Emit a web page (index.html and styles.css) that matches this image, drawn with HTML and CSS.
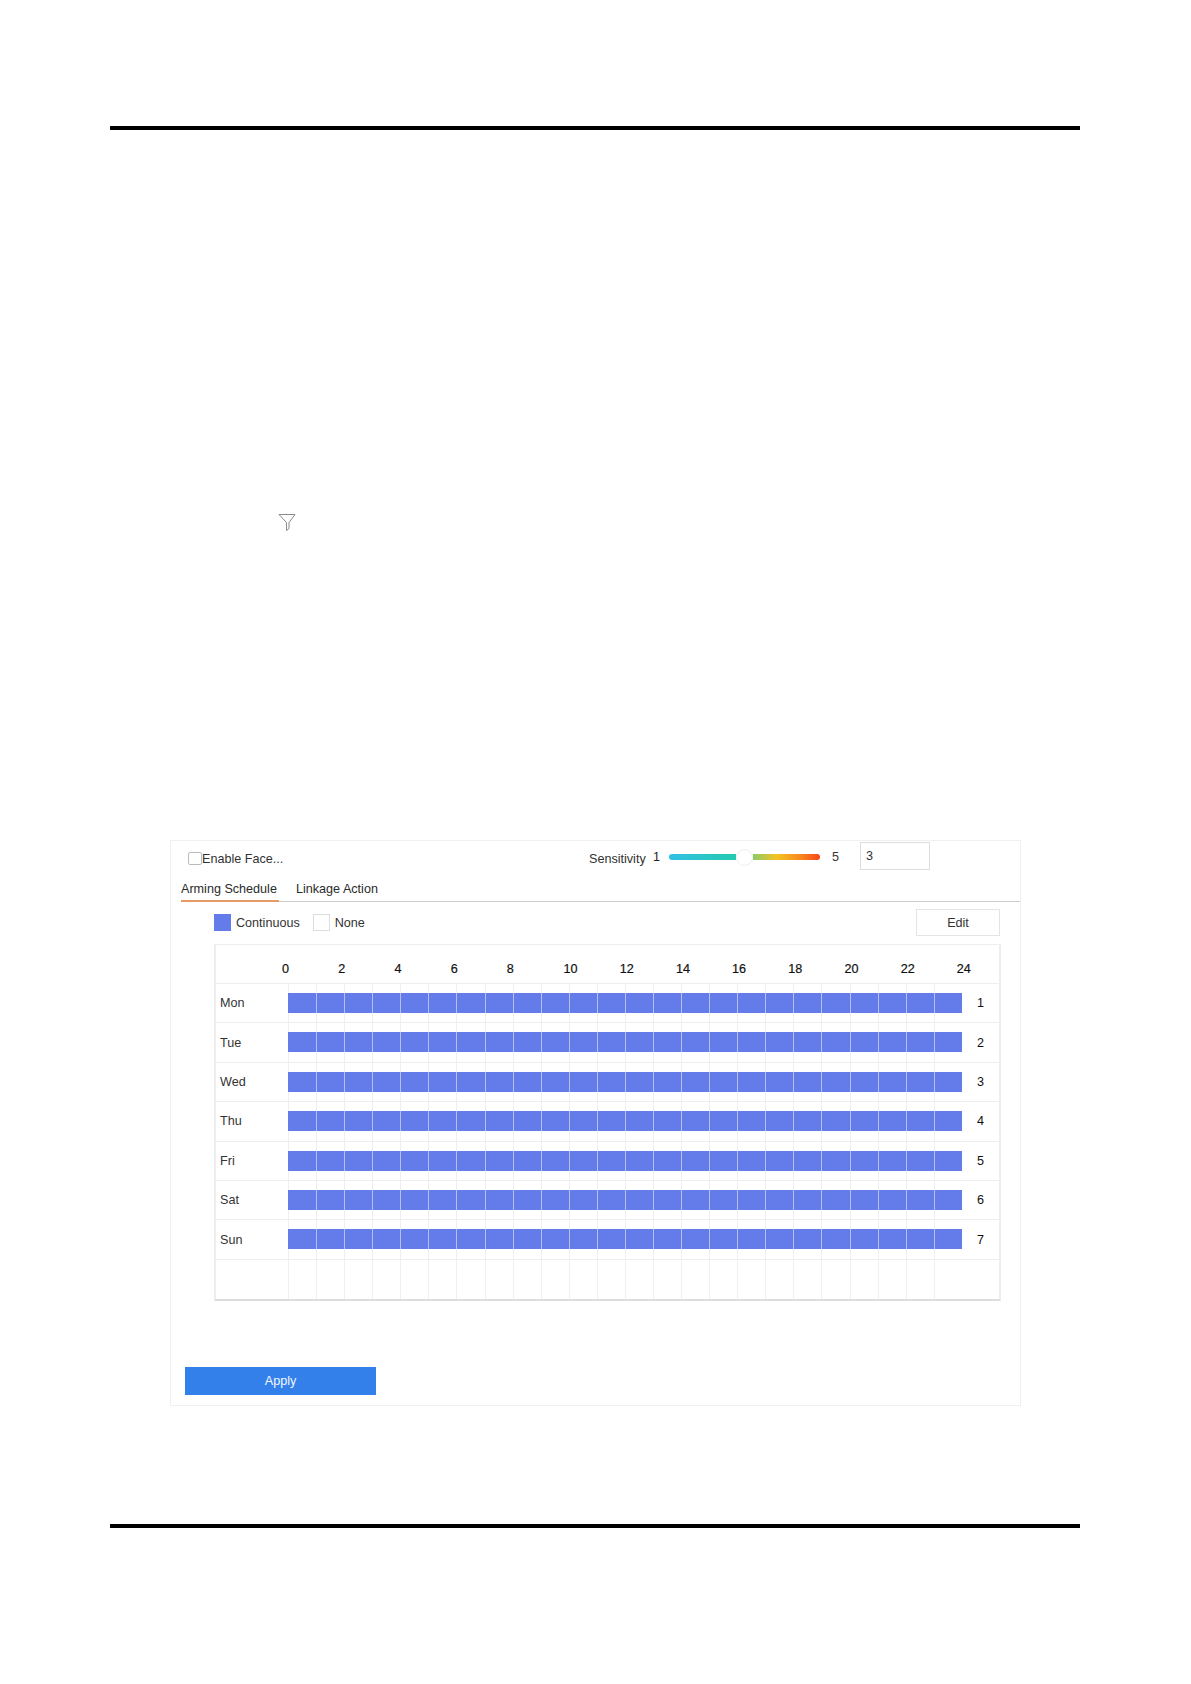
FILE: index.html
```html
<!DOCTYPE html>
<html lang="en">
<head>
<meta charset="utf-8">
<title>Enable Face</title>
<link rel="stylesheet" href="styles.css">
</head>
<body>
<div class="page">
  <div class="rule"></div>
  <svg class="filter-icon" width="18" height="18" viewBox="0 0 18 18" aria-hidden="true">
    <path d="M1 1.5H17L11 9.5V15.5L8.5 17.5V9.5Z" fill="none" stroke="#8a8a8a" stroke-width="1"/>
  </svg>
  <section class="panel">
    <div class="head">
      <label class="enable"><span class="check"></span>Enable Face...</label>
      <span class="sens-label">Sensitivity</span>
      <span class="sens-min">1</span>
      <div class="slider">
        <span class="track-left"></span>
        <span class="thumb"></span>
        <span class="track-right"></span>
      </div>
      <span class="sens-max">5</span>
      <div class="sens-input">3</div>
    </div>
    <div class="tabs">
      <span class="tab tab-active">Arming Schedule</span>
      <span class="tab">Linkage Action</span>
    </div>
    <div class="toolbar">
      <span class="swatch swatch-on"></span><span class="legend">Continuous</span>
      <span class="swatch swatch-off"></span><span class="legend">None</span>
      <button class="edit">Edit</button>
    </div>
    <div class="schedule">
      <div class="hours">
        <span>0</span><span>2</span><span>4</span><span>6</span><span>8</span><span class="two">10</span><span class="two">12</span>
        <span class="two">14</span><span class="two">16</span><span class="two">18</span><span class="two">20</span><span class="two">22</span><span class="two">24</span>
      </div>
      <div class="row"><span class="day">Mon</span><div class="track on"><i></i><i></i><i></i><i></i><i></i><i></i><i></i><i></i><i></i><i></i><i></i><i></i><i></i><i></i><i></i><i></i><i></i><i></i><i></i><i></i><i></i><i></i><i></i><i></i></div><span class="num">1</span></div>
      <div class="row"><span class="day">Tue</span><div class="track on"><i></i><i></i><i></i><i></i><i></i><i></i><i></i><i></i><i></i><i></i><i></i><i></i><i></i><i></i><i></i><i></i><i></i><i></i><i></i><i></i><i></i><i></i><i></i><i></i></div><span class="num">2</span></div>
      <div class="row"><span class="day">Wed</span><div class="track on"><i></i><i></i><i></i><i></i><i></i><i></i><i></i><i></i><i></i><i></i><i></i><i></i><i></i><i></i><i></i><i></i><i></i><i></i><i></i><i></i><i></i><i></i><i></i><i></i></div><span class="num">3</span></div>
      <div class="row"><span class="day">Thu</span><div class="track on"><i></i><i></i><i></i><i></i><i></i><i></i><i></i><i></i><i></i><i></i><i></i><i></i><i></i><i></i><i></i><i></i><i></i><i></i><i></i><i></i><i></i><i></i><i></i><i></i></div><span class="num">4</span></div>
      <div class="row"><span class="day">Fri</span><div class="track on"><i></i><i></i><i></i><i></i><i></i><i></i><i></i><i></i><i></i><i></i><i></i><i></i><i></i><i></i><i></i><i></i><i></i><i></i><i></i><i></i><i></i><i></i><i></i><i></i></div><span class="num">5</span></div>
      <div class="row"><span class="day">Sat</span><div class="track on"><i></i><i></i><i></i><i></i><i></i><i></i><i></i><i></i><i></i><i></i><i></i><i></i><i></i><i></i><i></i><i></i><i></i><i></i><i></i><i></i><i></i><i></i><i></i><i></i></div><span class="num">6</span></div>
      <div class="row"><span class="day">Sun</span><div class="track on"><i></i><i></i><i></i><i></i><i></i><i></i><i></i><i></i><i></i><i></i><i></i><i></i><i></i><i></i><i></i><i></i><i></i><i></i><i></i><i></i><i></i><i></i><i></i><i></i></div><span class="num">7</span></div>
      <div class="row row-empty"><span class="day"></span><div class="track"><i></i><i></i><i></i><i></i><i></i><i></i><i></i><i></i><i></i><i></i><i></i><i></i><i></i><i></i><i></i><i></i><i></i><i></i><i></i><i></i><i></i><i></i><i></i><i></i></div><span class="num"></span></div>
    </div>
    <button class="apply">Apply</button>
  </section>
  <div class="rule rule-bottom"></div>
</div>
</body>
</html>
```
FILE: styles.css
```css
* { box-sizing: border-box; }
html, body { margin: 0; background: #fff; }
body { font-family: "Liberation Sans", Arial, sans-serif; font-size: 12.6px; color: #333; }
.page { width: 1191px; height: 1684px; padding: 126px 111px 0 110px; }
.rule { height: 4px; background: #000; }
.rule-bottom { margin-top: 118px; }
.filter-icon { display: block; margin: 383px 0 0 168px; }

.panel { width: 851px; height: 566px; margin: 309px 0 0 60px; border: 1px solid #f0f0f0; }

.head { display: flex; align-items: center; height: 33px; padding-left: 17px; }
.enable { display: flex; align-items: center; width: 401px; padding-top: 2px; white-space: nowrap; }
.check { flex: none; width: 14px; height: 13px; border: 1px solid #bbb; border-radius: 2px; }
.sens-label { width: 64px; padding-top: 3px; }
.sens-min { width: 16px; margin-top: -2px; color: #222; }
.slider { display: flex; align-items: center; width: 151px; margin-top: -1px; }
.track-left { width: 67px; height: 6px; border-radius: 3px 0 0 3px; background: linear-gradient(90deg, #33bfe6, #22cbb0); }
.thumb { width: 17px; height: 17px; border-radius: 50%; background: #fff; border: 1px solid #eee; }
.track-right { flex: 1; height: 6px; border-radius: 0 3px 3px 0; background: linear-gradient(90deg, #8ccb6a, #f4c322 35%, #f88a1e 70%, #f8431a); }
.sens-max { width: 26px; margin: -1px 0 0 12px; }
.sens-input { width: 70px; height: 28px; margin: -3px 0 0 2px; padding: 6px 0 0 5px; border: 1px solid #ddd; }

.tabs { display: flex; height: 28px; margin-left: 10px; border-bottom: 1px solid #ccc; }
.tab { height: 28px; padding: 8px 2px 0 0; margin-right: 17px; color: #2b2b2b; white-space: nowrap; }
.tab-active { width: 98px; border-bottom: 2px solid #e99b66; }

.toolbar { display: flex; align-items: center; height: 27px; margin: 7px 20px 0 43px; }
.swatch { flex: none; width: 17px; height: 17px; }
.swatch-on { background: #637cea; }
.swatch-off { background: #fff; border: 1px solid #ddd; }
.legend { margin: 0 13px 0 5px; }
.edit { width: 84px; height: 27px; margin-left: auto; padding: 0; border: 1px solid #e4e4e4; background: #fff; font: inherit; color: #333; }

.schedule { width: 787px; margin: 8px 0 0 43px; border: 2px solid #eee; border-bottom-color: #ddd; border-top-width: 1px; }
.hours { display: flex; height: 39px; padding: 17px 0 0 41.5px; border-bottom: 1px solid #eee; color: #111; -webkit-text-stroke: 0.2px #111; }
.hours span { width: 56.2px; text-align: center; }
.hours .two { padding-left: 8px; }

.row { display: flex; height: 39.4px; border-bottom: 1px solid #eee; }
.row-empty { height: 39px; border-bottom: 0; }
.day { display: flex; align-items: center; width: 72px; padding-left: 4px; }
.track { display: flex; width: 674px; }
.track i { flex: 1; border-left: 1px solid #efefef; }
.track.on i::before {
  content: "";
  display: block;
  height: 20px;
  margin: 9px 0 0 -1px;
  border-left: 1px solid #b4c0f4;
  background: #637cea;
}
.track.on i:first-child::before { border-left-color: #637cea; }
.num { display: flex; align-items: center; justify-content: center; flex: 1; color: #111; }

.apply { display: block; width: 191px; height: 28px; margin: 66px 0 0 14px; padding: 0; border: 0; background: #3480ea; color: #f2f7ff; font: inherit; }
```
